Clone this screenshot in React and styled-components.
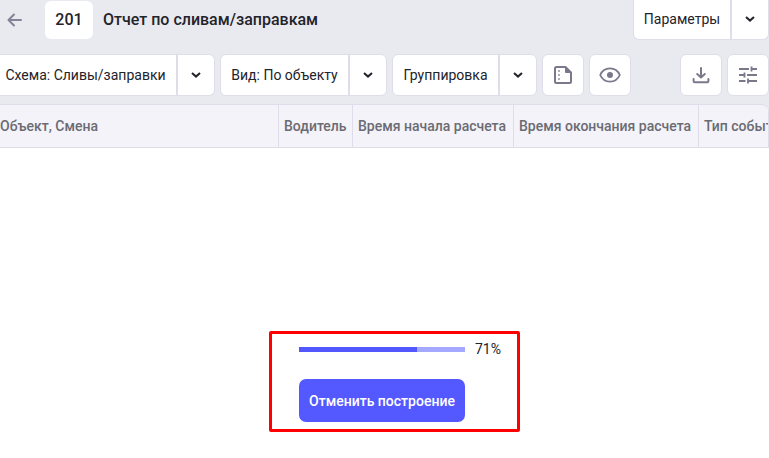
import React from 'react';
import styled, { createGlobalStyle } from 'styled-components';

const GlobalStyle = createGlobalStyle`
    * {
        box-sizing: border-box;
    }

    body {
        margin: 0;
        background-color: #ffffff;
        color: #23232b;
        font-family: Roboto, "Liberation Sans", sans-serif;
        font-size: 14px;
    }

    button {
        font: inherit;
        color: inherit;
        cursor: pointer;
    }
`

const Page = styled.div`
    min-height: 100vh;
    display: flex;
    flex-direction: column;
    overflow: hidden;
`

const Top = styled.header`
    background-color: #e9eaef;
`

const TitleBar = styled.div`
    display: flex;
    align-items: center;
    height: 39px;
`

const BackButton = styled.button`
    display: flex;
    align-items: center;
    width: 45px;
    height: 38px;
    padding: 0 0 0 7px;
    border: none;
    background: none;
    color: #858296;
`

const Badge = styled.span`
    width: 48px;
    height: 38px;
    border-radius: 6px;
    background-color: white;
    font-size: 16px;
    font-weight: 500;
    line-height: 38px;
    text-align: center;
`

const Title = styled.h1`
    flex: 1;
    margin: 0 0 0 10px;
    font-size: 16px;
    font-weight: 500;
    line-height: 38px;
    white-space: nowrap;
`

const Toolbar = styled.div`
    display: flex;
    gap: 5px;
    padding: 15px 0 8px;
`

const Split = styled.div`
    display: flex;
    height: ${(props) => props.$top ? "40px" : "42px"};
    border: 1px solid #dedde9;
    border-top-width: ${(props) => props.$top ? "0" : "1px"};
    border-left-width: ${(props) => props.$flush ? "0" : "1px"};
    border-radius: ${(props) => props.$top ? "0 0 6px 6px" : props.$flush ? "0 6px 6px 0" : "6px"};
    background-color: white;
`

const SplitLabel = styled.button`
    width: ${(props) => props.$width}px;
    padding: 0 ${(props) => props.$flush ? "5px" : "0"} 0 0;
    border: none;
    background: none;
    white-space: nowrap;
`

const SplitArrow = styled.button`
    display: flex;
    align-items: center;
    justify-content: center;
    width: 38px;
    padding: 0;
    border: none;
    border-left: 2px solid #dedde9;
    background: none;
`

const IconButton = styled.button`
    display: flex;
    align-items: center;
    justify-content: center;
    width: 42px;
    height: 42px;
    padding: 0;
    border: 1px solid #dedde9;
    border-radius: 6px;
    background-color: white;
    color: #7b788c;
`

const IconGroup = styled.div`
    display: flex;
    gap: 5px;
    margin-left: ${(props) => props.$end ? "auto" : "0"};
`

const TableWrap = styled.div`
    overflow: hidden;
    border-top: 1px solid #dedde9;
    border-top-right-radius: 8px;
    background-color: #f3f3f9;
`

const Table = styled.table`
    width: 100%;
    table-layout: fixed;
    border-collapse: separate;
    border-spacing: 0;
`

const Th = styled.th`
    height: 43px;
    padding: 0 0 0 ${(props) => props.$first ? "0" : "5px"};
    border-right: 1px solid #dedde9;
    border-bottom: 1px solid #dedde9;
    color: #6b6b73;
    font-weight: 500;
    text-align: left;
    white-space: nowrap;
    overflow: hidden;
`

const Content = styled.main`
    flex: 1;
    display: flex;
    justify-content: center;
    padding: 183px 0 26px 20px;
`

const Frame = styled.section`
    width: 251px;
    height: 101px;
    padding: 5px 10px 0 27px;
    border: 3px solid #fe0000;
    border-radius: 2px;
`

const ProgressRow = styled.div`
    display: flex;
    align-items: center;
    gap: 10px;
    height: 20px;
    margin-bottom: 20px;
`

const Track = styled.div`
    width: 166px;
    height: 5px;
    background-color: #a5a8ff;
`

const Bar = styled.div`
    height: 100%;
    background-color: #5257ff;
`

const CancelButton = styled.button`
    width: 166px;
    height: 43px;
    padding: 0;
    border: none;
    border-radius: 7px;
    background-color: #5459ff;
    color: white;
    font-weight: 500;
    white-space: nowrap;
`

const BackIcon = () => (
    <svg width="16" height="16" viewBox="0 0 16 16" fill="none" stroke="currentColor" strokeWidth="2" strokeLinecap="round" strokeLinejoin="round">
        <path d="M14 8H2M7 2.5L1.5 8L7 13.5" />
    </svg>
)

const ChevronIcon = () => (
    <svg width="10" height="6" viewBox="0 0 10 6" fill="none" stroke="currentColor" strokeWidth="2">
        <path d="M1 1L5 4.6L9 1" />
    </svg>
)

const ReportIcon = () => (
    <svg width="20" height="20" viewBox="0 0 20 20" fill="none" stroke="currentColor" strokeWidth="2" strokeLinejoin="round">
        <path d="M12.5 2H3.5Q2 2 2 3.5V16.5Q2 18 3.5 18H16.5Q18 18 18 16.5V7.5Z" />
        <path d="M12.5 2V7.5H18Z" fill="currentColor" strokeWidth="1" />
        <path d="M5.2 6H6.8M5.2 10H6.8M5.2 14H6.8" strokeWidth="1.6" />
    </svg>
)

const EyeIcon = () => (
    <svg width="22" height="16" viewBox="0 0 22 16" fill="none" stroke="currentColor" strokeWidth="1.8">
        <path d="M1.2 8C3 3.9 6.6 1.4 11 1.4S19 3.9 20.8 8C19 12.1 15.4 14.6 11 14.6S3 12.1 1.2 8Z" />
        <circle cx="11" cy="8" r="3" fill="currentColor" stroke="none" />
    </svg>
)

const DownloadIcon = () => (
    <svg width="18" height="18" viewBox="0 0 18 18" fill="none" stroke="currentColor" strokeWidth="2" strokeLinecap="round" strokeLinejoin="round">
        <path d="M9 2V11M5.2 8L9 11.5L12.8 8" />
        <path d="M1.6 13V15Q1.6 16.2 2.8 16.2H15.2Q16.4 16.2 16.4 15V13" />
    </svg>
)

const TuneIcon = () => (
    <svg width="18" height="18" viewBox="0 0 18 18" fill="none" stroke="currentColor" strokeWidth="1.8">
        <path d="M0 3H10M12.5 3H18M12.5 0.5V5.5" />
        <path d="M0 9H5.5M5.5 6.5V11.5M8 9H18" />
        <path d="M0 15H6.5M9 15H18M9 12.5V17.5" />
    </svg>
)

const SplitButton = ({ label, width, top, flush }) => (
    <Split $top={top} $flush={flush}>
        <SplitLabel $width={width} $flush={flush}>{label}</SplitLabel>
        <SplitArrow aria-label={label}><ChevronIcon /></SplitArrow>
    </Split>
)

const App = () => {
    const progress = 71;
  return (
    <Page>
        <GlobalStyle />
        <Top>
            <TitleBar>
                <BackButton aria-label="Назад"><BackIcon /></BackButton>
                <Badge>201</Badge>
                <Title>Отчет по сливам/заправкам</Title>
                <SplitButton label="Параметры" width={96} top />
            </TitleBar>
            <Toolbar>
                <SplitButton label="Схема: Сливы/заправки" width={176} flush />
                <SplitButton label="Вид: По объекту" width={127} />
                <SplitButton label="Группировка" width={105} />
                <IconGroup>
                    <IconButton aria-label="Отчет"><ReportIcon /></IconButton>
                    <IconButton aria-label="Просмотр"><EyeIcon /></IconButton>
                </IconGroup>
                <IconGroup $end>
                    <IconButton aria-label="Скачать"><DownloadIcon /></IconButton>
                    <IconButton aria-label="Настройки"><TuneIcon /></IconButton>
                </IconGroup>
            </Toolbar>
            <TableWrap>
                <Table>
                    <colgroup>
                        <col width="279" />
                        <col width="74" />
                        <col width="161" />
                        <col width="185" />
                        <col />
                    </colgroup>
                    <thead>
                        <tr>
                            <Th $first>Объект, Смена</Th>
                            <Th>Водитель</Th>
                            <Th>Время начала расчета</Th>
                            <Th>Время окончания расчета</Th>
                            <Th>Тип события</Th>
                        </tr>
                    </thead>
                </Table>
            </TableWrap>
        </Top>
        <Content>
            <Frame>
                <ProgressRow>
                    <Track role="progressbar" aria-label="Построение отчета" aria-valuenow={progress} aria-valuemin={0} aria-valuemax={100}>
                        <Bar style={{ width: `${progress}%` }} />
                    </Track>
                    <span>{progress}%</span>
                </ProgressRow>
                <CancelButton>Отменить построение</CancelButton>
            </Frame>
        </Content>
    </Page>
  )
}

export default App
